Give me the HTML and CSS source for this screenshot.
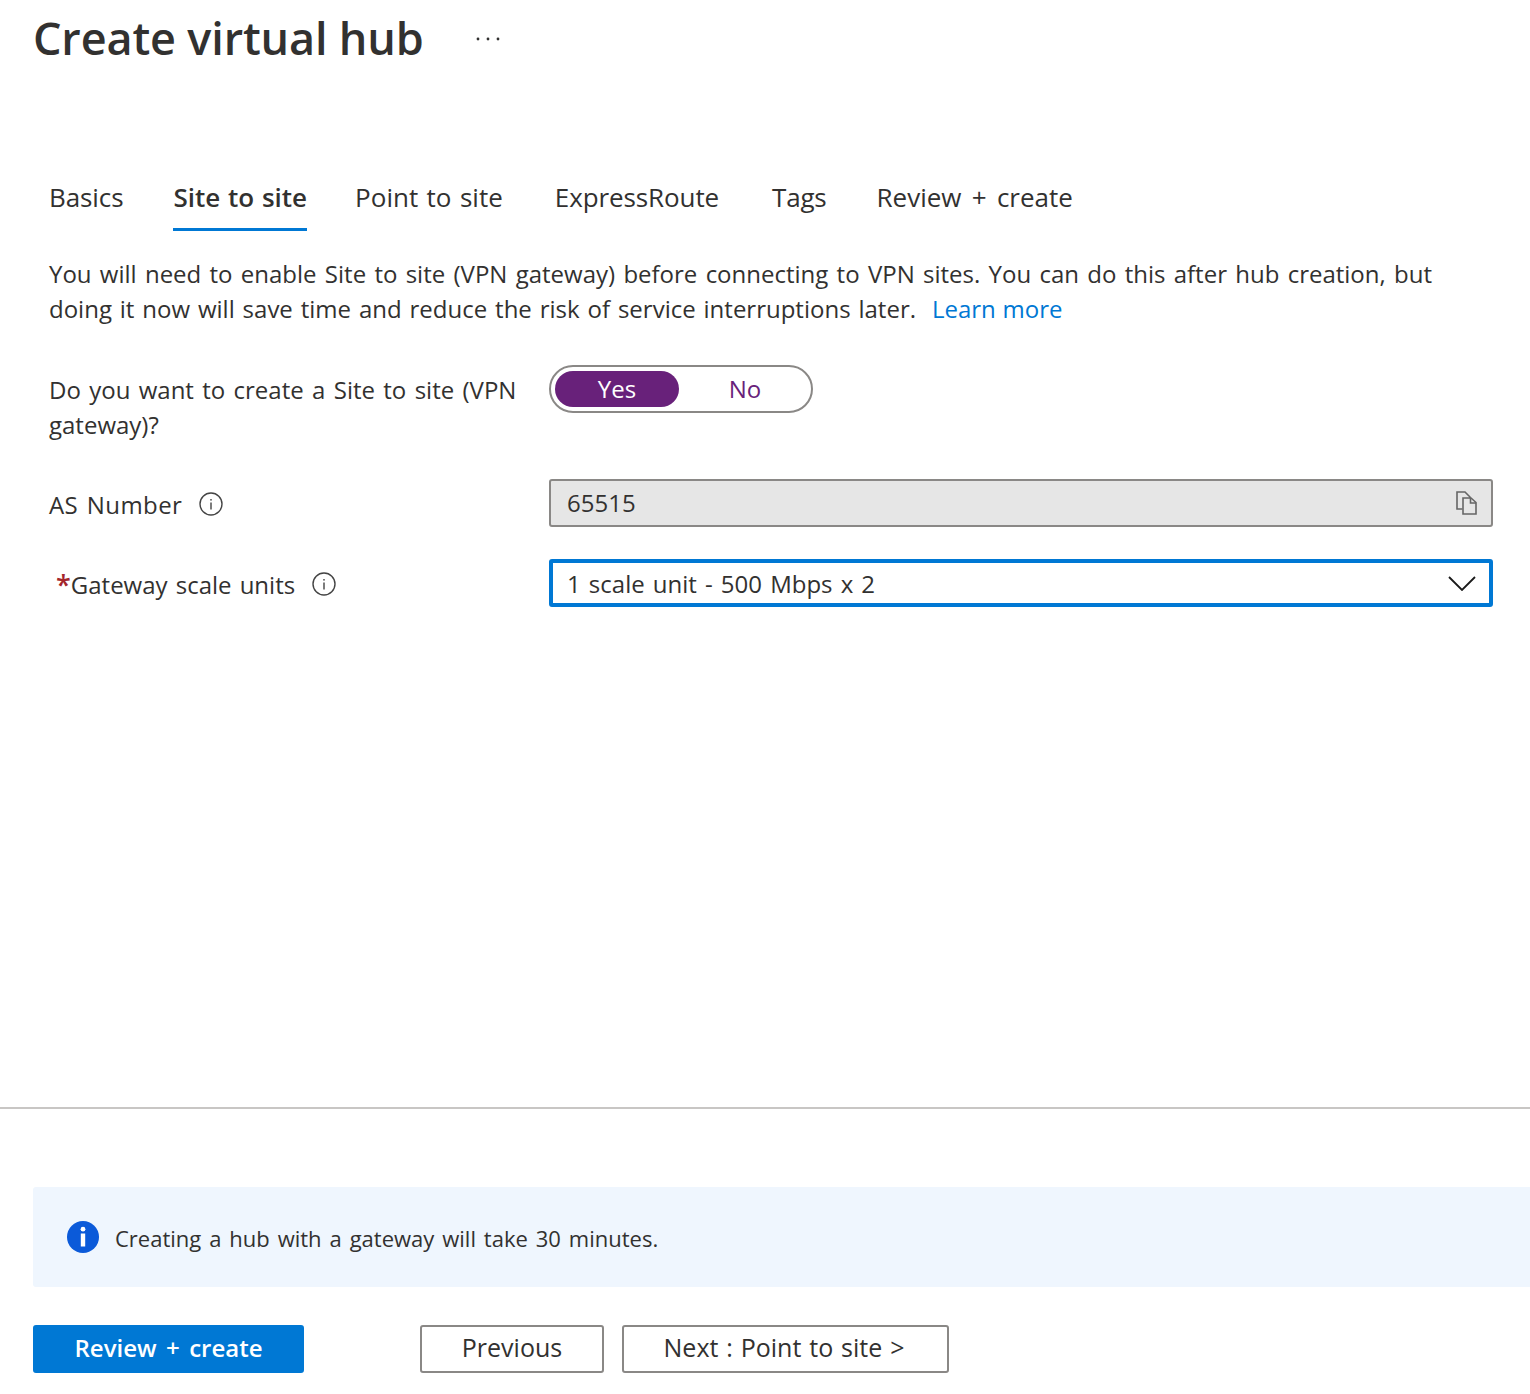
FILE: index.html
```html
<!DOCTYPE html>
<html lang="en">
<head>
<meta charset="utf-8">
<title>Create virtual hub</title>
<link rel="stylesheet" href="styles.css">
</head>
<body>
<div class="page">
  <header class="title-row">
    <h1 class="title">Create virtual hub</h1>
    <span class="more">
      <svg width="24" height="4" viewBox="0 0 24 4"><circle cx="2" cy="2" r="1.4"/><circle cx="12" cy="2" r="1.4"/><circle cx="22" cy="2" r="1.4"/></svg>
    </span>
  </header>
  <nav class="tabs">
    <span class="tab tab-basics">Basics</span>
    <span class="tab tab-active">Site to site</span>
    <span class="tab tab-point">Point to site</span>
    <span class="tab tab-express">ExpressRoute</span>
    <span class="tab tab-tags">Tags</span>
    <span class="tab tab-review">Review + create</span>
  </nav>
  <main class="content">
    <p class="intro"><span class="intro-line intro-first">You will need to enable Site to site (VPN gateway) before connecting to VPN sites. You can do this after hub creation, but</span><span class="intro-line intro-second">doing it now will save time and reduce the risk of service interruptions later. <a class="link" href="#">Learn more</a></span></p>
    <div class="form-row row-toggle">
      <div class="label">Do you want to create a Site to site (VPN gateway)?</div>
      <div class="toggle">
        <span class="toggle-on">Yes</span>
        <span class="toggle-off">No</span>
      </div>
    </div>
    <div class="form-row row-as">
      <div class="label label-inline"><span class="as-text">AS Number</span>
        <svg class="info" width="24" height="24" viewBox="0 0 24 24"><circle cx="12" cy="12" r="11" fill="none" stroke="#444" stroke-width="1.4"/><rect x="11.3" y="10.5" width="1.4" height="7" fill="#444"/><rect x="11.3" y="7" width="1.4" height="1.6" fill="#444"/></svg>
      </div>
      <div class="field field-readonly">
        <span class="field-value">65515</span>
        <svg class="copy" width="22" height="24" viewBox="0 0 22 24" fill="none" stroke="#666" stroke-width="1.6"><path d="M6.5 18H1V1h8l5 5v1"/><path d="M7 7h8l5 4.5V23H7z" fill="#e6e6e6"/><path d="M14.5 7v5H20"/></svg>
      </div>
    </div>
    <div class="form-row row-gateway">
      <div class="label label-inline label-required"><span class="req">*</span><span>Gateway scale units</span>
        <svg class="info" width="24" height="24" viewBox="0 0 24 24"><circle cx="12" cy="12" r="11" fill="none" stroke="#444" stroke-width="1.4"/><rect x="11.3" y="10.5" width="1.4" height="7" fill="#444"/><rect x="11.3" y="7" width="1.4" height="1.6" fill="#444"/></svg>
      </div>
      <div class="field field-select">
        <span>1 scale unit - 500 Mbps x 2</span>
        <svg class="chev" width="28" height="16" viewBox="0 0 28 16" fill="none" stroke="#1a1a1a" stroke-width="1.8"><path d="M1 2l13 13L27 2"/></svg>
      </div>
    </div>
  </main>
  <div class="divider"></div>
  <div class="notice">
    <svg class="notice-icon" width="32" height="32" viewBox="0 0 32 32"><circle cx="16" cy="16" r="16" fill="#0b5ad9"/><circle cx="16" cy="8.2" r="2.4" fill="#fff"/><rect x="13.8" y="12.5" width="4.4" height="13" fill="#fff"/></svg>
    <span class="notice-text">Creating a hub with a gateway will take 30 minutes.</span>
  </div>
  <footer class="actions">
    <button class="btn btn-primary">Review + create</button>
    <button class="btn btn-prev">Previous</button>
    <button class="btn btn-next">Next : Point to site &gt;</button>
  </footer>
</div>
</body>
</html>
```

FILE: styles.css
```css
* { box-sizing: border-box; }
html, body { margin: 0; padding: 0; background: #fff; }
body {
  font-family: "Open Sans", "Noto Sans", "Liberation Sans", sans-serif;
  color: #323130;
  font-size: 24px;
  word-spacing: 2.1px;
}
.page { width: 1530px; height: 1394px; overflow: hidden; display: flex; flex-direction: column; }
.title-row { display: flex; align-items: center; height: 78px; padding-left: 33px; }
.title { margin: 0; font-size: 45px; font-weight: 600; line-height: 76px; height: 78px; width: 443px; white-space: nowrap; letter-spacing: -0.15px; word-spacing: 0; }
.more { display: flex; fill: #323130; }
.tabs { display: flex; margin-top: 90px; padding-left: 49px; height: 63px; align-items: flex-start; }
.tab { font-size: 26px; line-height: 58px; height: 63px; white-space: nowrap; word-spacing: 1.7px; }
.tab-basics { margin-right: 50px; letter-spacing: -0.1px; }
.tab-active { font-weight: 600; border-bottom: 3px solid #0078d4; margin-right: 48px; word-spacing: 1px; }
.tab-point { margin-right: 52px; }
.tab-express { margin-right: 53px; letter-spacing: -0.1px; }
.tab-tags { margin-right: 50px; letter-spacing: -0.2px; }
.tab-review { word-spacing: 3.5px; }
.content { padding-left: 49px; padding-right: 37px; flex: 1; }
.intro { margin: 25px 0 0; font-size: 24px; line-height: 35px; white-space: nowrap; }
.intro-line { display: block; }
.intro-first { word-spacing: 2.05px; }
.intro-second { word-spacing: 1.65px; }
.link { color: #0078d4; text-decoration: none; margin-left: 8px; word-spacing: 0.5px; }
.form-row { display: flex; }
.label { width: 500px; flex: none; font-size: 24px; line-height: 35px; }
.row-toggle { margin-top: 39px; height: 114px; }
.row-toggle .label { padding-top: 7px; }
.toggle { display: flex; align-items: center; width: 264px; height: 48px; border: 2px solid #8a8886; border-radius: 24px; padding: 4px 0 4px 4px; }
.toggle-on { width: 124px; height: 36px; background: #68217a; color: #fff; border-radius: 18px; text-align: center; line-height: 36px; }
.toggle-off { width: 132px; text-align: center; color: #68217a; line-height: 36px; }
.row-as { height: 80px; }
.as-text { letter-spacing: 0.4px; }
.label-inline { display: flex; align-items: center; height: 48px; gap: 17px; padding-top: 2px; }
.field { flex: 1; height: 48px; border-radius: 3px; display: flex; align-items: center; justify-content: space-between; padding-left: 16px; font-size: 24px; }
.field-readonly { background: #e6e6e6; border: 2px solid #8a8886; padding-right: 13px; }
.field-value { margin-top: -2px; }
.field-select { border: 4px solid #0078d4; padding-left: 14px; padding-right: 13px; word-spacing: 1.9px; }
.label-required { padding-left: 7px; word-spacing: 1.9px; }
.req { color: #a4262c; font-size: 27px; font-weight: 600; margin-right: -17px; }
.divider { height: 2px; background: #c8c6c4; margin-bottom: 78px; }
.notice { margin-left: 33px; height: 100px; background: #eff6fe; border-radius: 3px 0 0 3px; display: flex; align-items: center; padding-left: 34px; gap: 16px; flex: none; }
.notice-text { font-size: 22px; word-spacing: 2.2px; margin-top: 2px; }
.actions { display: flex; margin: 38px 0 21px 33px; align-items: center; }
.btn { height: 48px; font-family: inherit; font-size: 25px; border-radius: 3px; border: 2px solid #8a8886; background: #fff; color: #323130; padding: 0 0 4px; word-spacing: 1.4px; }
.btn-primary { width: 271px; background: #0078d4; border-color: #0078d4; color: #fff; font-weight: 600; font-size: 24px; word-spacing: 3.2px; margin-right: 116px; }
.btn-prev { width: 184px; margin-right: 18px; }
.btn-next { width: 327px; padding-right: 3px; }
```
